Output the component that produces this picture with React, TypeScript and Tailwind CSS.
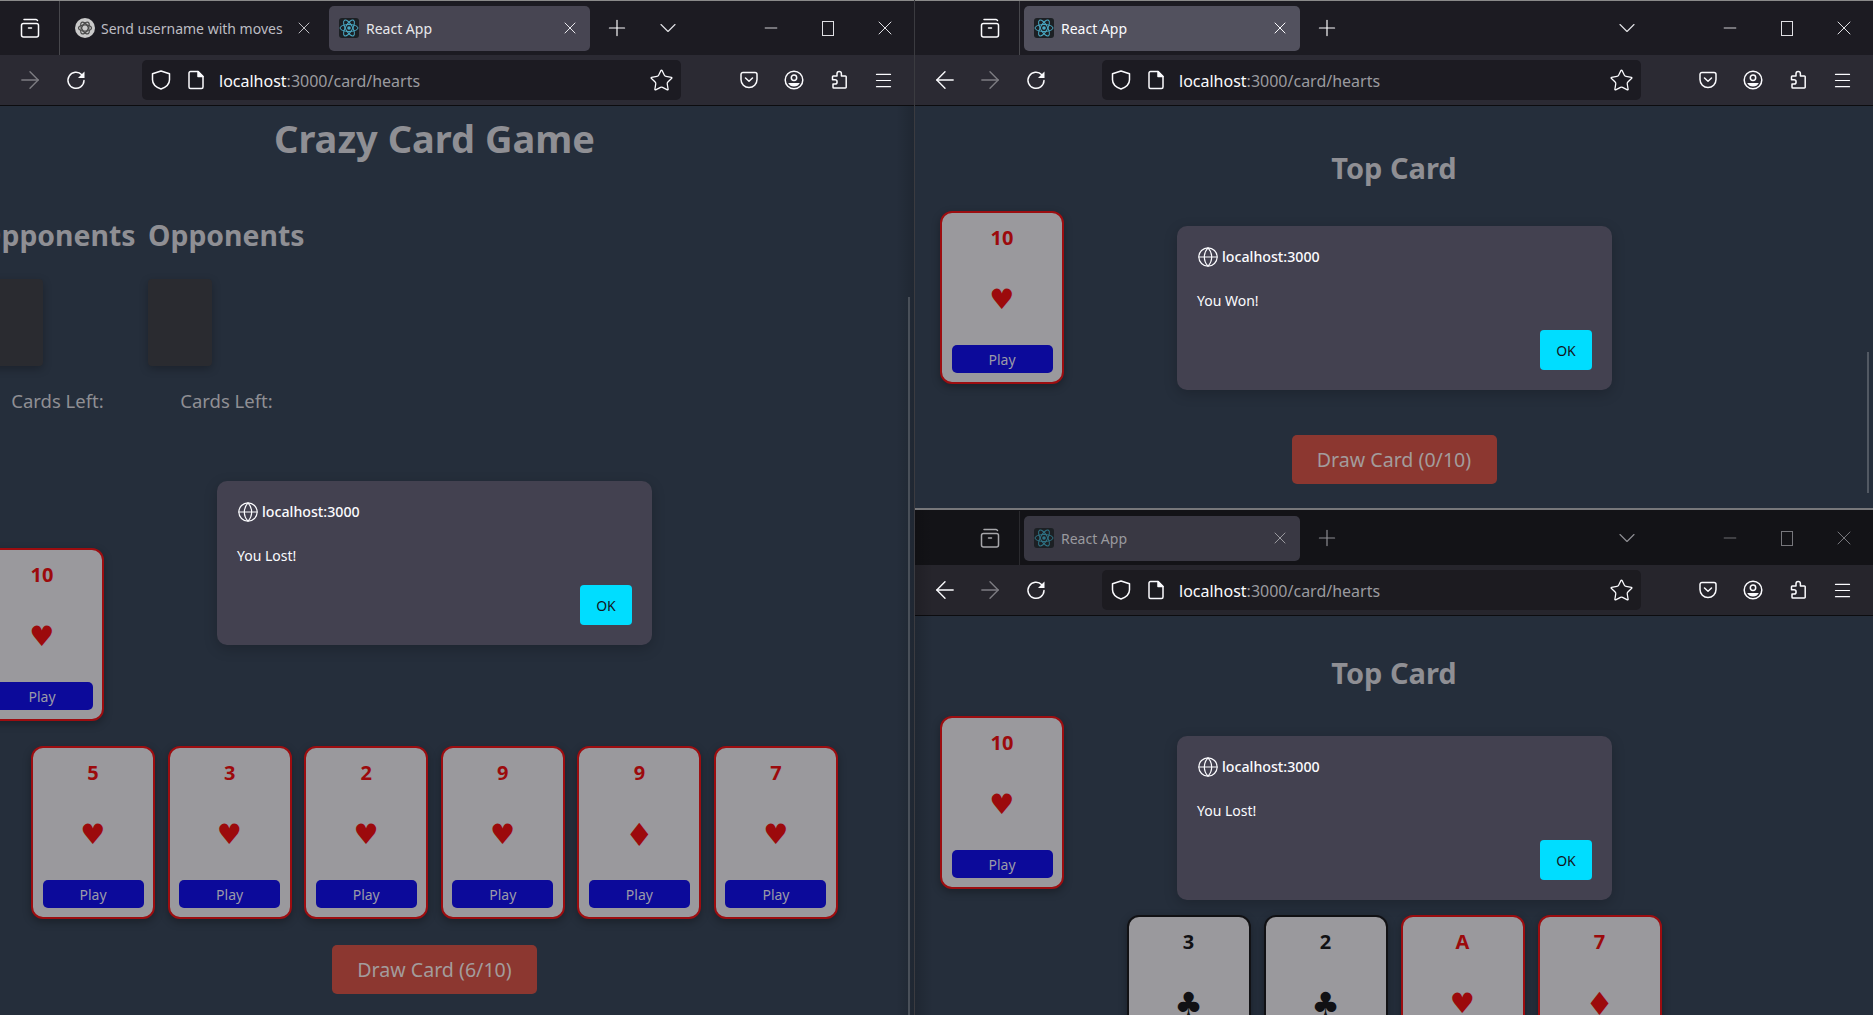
import { ReactNode } from "react";
import { ArrowLeft, ArrowRight, ChevronDown, Globe, Menu, Minus, Plus, Star, X } from "lucide-react";

const font = { fontFamily: '"Noto Sans", "Open Sans", sans-serif' };

function Svg({ children, className = "" }: { children: ReactNode; className?: string }) {
  return (
    <svg viewBox="0 0 20 20" width="20" height="20" fill="none" stroke="currentColor" strokeWidth="1.5" strokeLinecap="round" strokeLinejoin="round" className={className}>
      {children}
    </svg>
  );
}

// --- Browser chrome icons ---
const ViewIcon = () => (
  <Svg>
    <path d="M4 1.500h12a2 2 0 0 1 1.500 1" />
    <rect x="1.500" y="5.500" width="17" height="13.500" rx="2" />
    <path d="M8.500 10h3" />
  </Svg>
);

const ShieldIcon = () => (
  <Svg>
    <path d="M10 1l8.500 2.800v6c0 4.500-3.500 7.500-8.500 9.200-5-1.700-8.500-4.700-8.500-9.200v-6z" />
  </Svg>
);

const PageIcon = () => (
  <Svg>
    <path d="M3 3a1.500 1.500 0 0 1 1.500-1.500h7.500l5 5v10.500a1.500 1.500 0 0 1-1.500 1.500h-11A1.500 1.500 0 0 1 3 17z" />
    <path d="M12 1.500v5h5z" fill="currentColor" />
  </Svg>
);

const ReloadIcon = () => (
  <Svg>
    <path d="M15.800 4.800A8 8 0 1 0 18 10.500" />
    <path d="M18.500 1.500v6.500H12z" fill="currentColor" stroke="none" />
  </Svg>
);

const PocketIcon = () => (
  <Svg>
    <path d="M2 4.500a2 2 0 0 1 2-2h12a2 2 0 0 1 2 2v5a8 8 0 0 1-16 0z" />
    <path d="M6.500 8l3.500 3.300L13.500 8" />
  </Svg>
);

const AccountIcon = () => (
  <Svg>
    <circle cx="10" cy="10" r="8.800" />
    <circle cx="10" cy="7.800" r="2.700" />
    <path d="M4.200 13h11.600a6.500 6.500 0 0 1-11.600 0z" fill="currentColor" stroke="none" />
  </Svg>
);

const PuzzleIcon = () => (
  <Svg>
    <path d="M8 6V3.800a2.200 2.200 0 0 1 4.400 0V6h4a.8.8 0 0 1 .8.800V17.200a.8.8 0 0 1-.8.800H4.800a.8.8 0 0 1-.8-.800V14h2a2.100 2.100 0 0 0 0-4.200H3.500V6.800A.8.8 0 0 1 4.300 6z" />
  </Svg>
);

const ReactIcon = ({ dim }: { dim?: boolean }) => (
  <svg viewBox="0 0 20 20" width="20" height="20" className="shrink-0 rounded-[3px] bg-[#1c2024]">
    <g fill="none" stroke={dim ? "#2f7385" : "#4aa9c4"} strokeWidth="1">
      <ellipse cx="10" cy="10" rx="9" ry="3.500" />
      <ellipse cx="10" cy="10" rx="9" ry="3.500" transform="rotate(60 10 10)" />
      <ellipse cx="10" cy="10" rx="9" ry="3.500" transform="rotate(120 10 10)" />
    </g>
    <circle cx="10" cy="10" r="1.800" fill={dim ? "#2f7385" : "#4aa9c4"} />
  </svg>
);

const ChatIcon = () => (
  <svg viewBox="0 0 20 20" width="20" height="20" className="shrink-0">
    <circle cx="10" cy="10" r="10" fill="#c9c9c9" />
    <g fill="none" stroke="#4a4a4a" strokeWidth="1.300">
      <ellipse cx="10" cy="10" rx="6.500" ry="3.200" />
      <ellipse cx="10" cy="10" rx="6.500" ry="3.200" transform="rotate(60 10 10)" />
      <ellipse cx="10" cy="10" rx="6.500" ry="3.200" transform="rotate(120 10 10)" />
    </g>
  </svg>
);

function Slot({ className, children }: { className: string; children: ReactNode }) {
  return <div className={`flex shrink-0 items-center justify-center ${className}`}>{children}</div>;
}

function BrowserBar({ tabClass, dim, extraTab }: { tabClass: string; dim?: boolean; extraTab?: boolean }) {
  return (
    <>
      <div className={`flex h-[54px] shrink-0 items-center ${dim ? "bg-[#131317]" : "bg-[#1c1b22]"}`}>
        <div className={`flex h-full w-[105px] shrink-0 items-center justify-end border-r pr-[19px] ${dim ? "border-[#2a2a2e] text-[#a6a6aa]" : "border-[#47474c] text-[#fbfbfe]"}`}>
          <ViewIcon />
        </div>
        {extraTab ? (
          <div className="flex h-[45px] w-[269px] shrink-0 items-center pl-[15px] text-[14px] text-[#bdbdc2]">
            <ChatIcon />
            <span className="ml-[6px]">Send username with moves</span>
            <X size={20} strokeWidth={1.2} className="ml-[11px]" />
          </div>
        ) : (
          <div className="w-[4px] shrink-0" />
        )}
        <div className={`flex h-[45px] shrink-0 items-center rounded-[5px] pl-[10px] pr-[10px] text-[14px] ${tabClass}`}>
          <ReactIcon dim={dim} />
          <span className="ml-[7px]">React App</span>
          <X size={20} strokeWidth={1.2} className="ml-auto" />
        </div>
        <Slot className={`w-[54px] ${dim ? "text-[#8e8e93]" : "text-[#fbfbfe]"}`}>
          <Plus size={26} strokeWidth={1.1} />
        </Slot>
        <Slot className={`ml-auto mr-[54px] w-[40px] ${dim ? "text-[#8e8e93]" : "text-[#e0e0e4]"}`}>
          <ChevronDown size={28} strokeWidth={1} />
        </Slot>
        <div className={`flex w-[172px] shrink-0 items-center ${dim ? "text-[#77777c]" : "text-[#e0e0e4]"}`}>
          <Slot className="w-[57px]">
            <Minus size={20} strokeWidth={1.1} />
          </Slot>
          <Slot className="w-[57px]">
            <div className="h-[15px] w-[12px] border border-current" />
          </Slot>
          <Slot className="w-[57px]">
            <X size={24} strokeWidth={1} />
          </Slot>
        </div>
      </div>
      <div className={`flex h-[51px] shrink-0 items-start border-b border-[#0c0c0f] pt-[5px] ${dim ? "bg-[#26252c]" : "bg-[#2b2a33]"}`}>
        <Slot className="ml-[7px] h-[40px] w-[45px] text-[#fbfbfe]">
          <ArrowLeft size={28} strokeWidth={1.2} />
        </Slot>
        <Slot className="h-[40px] w-[46px] text-[#7d7c82]">
          <ArrowRight size={28} strokeWidth={1.2} />
        </Slot>
        <Slot className="h-[40px] w-[45px] text-[#fbfbfe]">
          <ReloadIcon />
        </Slot>
        <div className={`ml-[44px] flex h-[40px] w-[539px] shrink-0 items-center rounded-[5px] text-[16px] ${dim ? "bg-[#1c1b20]" : "bg-[#1c1b22]"}`}>
          <Slot className="ml-[9px] w-[20px] text-[#fbfbfe]">
            <ShieldIcon />
          </Slot>
          <Slot className="ml-[15px] w-[20px] text-[#fbfbfe]">
            <PageIcon />
          </Slot>
          <span className="ml-[13px] mt-[2px] text-[#fbfbfe]">
            localhost<span className="text-[#9a9a9f]">:3000/card/hearts</span>
          </span>
          <Star size={25} strokeWidth={1.2} className="ml-auto mr-[7px] text-[#fbfbfe]" />
        </div>
        <div className="ml-auto flex h-[40px] items-center pr-[8px] text-[#fbfbfe]">
          <Slot className="w-[45px]">
            <PocketIcon />
          </Slot>
          <Slot className="w-[45px]">
            <AccountIcon />
          </Slot>
          <Slot className="w-[45px]">
            <PuzzleIcon />
          </Slot>
          <Slot className="w-[45px]">
            <Menu size={21} strokeWidth={1.4} />
          </Slot>
        </div>
      </div>
    </>
  );
}

// --- Game ---
type CardData = { rank: string; suit: string; black?: boolean };

function PlayingCard({ rank, suit, black }: CardData) {
  return (
    <div className={`flex h-[173px] w-[124px] shrink-0 flex-col items-center rounded-[12px] border-[2px] bg-[#9a999d] shadow-[0_3px_8px_rgba(0,0,0,0.3)] ${black ? "border-[#111114] text-[#111114]" : "border-[#9c0d10] text-[#9c0a0c]"}`}>
      <div className="mt-[10px] h-[30px] text-[20px] font-bold leading-[30px]">{rank}</div>
      <div className={`mt-[27px] h-[40px] leading-[40px] ${suit === "♥" ? "text-[28px]" : "text-[32px]"}`} style={{ fontFamily: '"DejaVu Sans", sans-serif' }}>
        {suit}
      </div>
      <button className="mt-[25px] h-[28px] w-[101px] rounded-[5px] bg-[#0c0a9a] text-[14px] text-[#9b9aa8]">Play</button>
    </div>
  );
}

function Dialog({ message, className }: { message: string; className: string }) {
  return (
    <div className={`absolute left-[262px] flex h-[164px] w-[435px] flex-col rounded-[10px] bg-[#434150] px-[20px] shadow-[0_4px_14px_rgba(0,0,0,0.2)] ${className}`}>
      <div className="mt-[20px] flex items-center text-[14.2px] font-medium text-[#fbfbfe]">
        <Globe size={22} strokeWidth={1.3} />
        <span className="ml-[3px]">localhost:3000</span>
      </div>
      <div className="mt-[23px] text-[14px] leading-[20px] text-[#fbfbfe]">{message}</div>
      <button className="ml-auto mt-[19px] h-[40px] w-[52px] rounded-[4px] bg-[#00ddff] text-[14px] text-[#15141a]">OK</button>
    </div>
  );
}

function DrawButton({ label, className }: { label: string; className: string }) {
  return (
    <button className={`mx-auto block h-[49px] w-[205px] rounded-[5px] bg-[#8c3730] text-[19.6px] text-[#a39c9c] ${className}`}>{label}</button>
  );
}

const hand: CardData[] = [
  { rank: "5", suit: "♥" },
  { rank: "3", suit: "♥" },
  { rank: "2", suit: "♥" },
  { rank: "9", suit: "♥" },
  { rank: "9", suit: "♦" },
  { rank: "7", suit: "♥" },
];

const lowerHand: CardData[] = [
  { rank: "3", suit: "♣", black: true },
  { rank: "2", suit: "♣", black: true },
  { rank: "A", suit: "♥" },
  { rank: "7", suit: "♦" },
];

function Opponent() {
  return (
    <div className="w-[157px] shrink-0">
      <h2 className="h-[40px] whitespace-nowrap text-[28.4px] font-bold leading-[40px] text-[#8f8f94]">Opponents</h2>
      <div className="mt-[24px] h-[87px] w-[64px] rounded-[4px] bg-[#2a2b30] shadow-[0_3px_8px_rgba(0,0,0,0.25)]" />
      <div className="mt-[23px] text-center text-[18.5px] leading-[24px] text-[#8f8f94]">Cards Left:</div>
    </div>
  );
}

export default function App() {
  return (
    <div className="flex h-[1015px] w-[1873px] overflow-hidden bg-[#252e3b]" style={font}>
      {/* left window, pushed partly off screen */}
      <div className="relative h-[1015px] w-[915px] shrink-0 overflow-hidden border-r border-[#3b3b40]">
        <div className="relative -ml-[45px] flex h-[1015px] w-[959px] flex-col">
          <div className="h-px shrink-0 bg-[#8a8a8a]" />
          <BrowserBar extraTab tabClass="w-[261px] bg-[#474552] text-[#e8e8ec]" />
          <div className="relative min-h-0 flex-1 bg-[#252e3b]">
            <h1 className="mt-[7px] h-[50px] text-center text-[38px] font-bold leading-[50px] text-[#8f8f94]">Crazy Card Game</h1>
            <div className="mt-[52px] flex gap-[12px] pl-[24px]">
              <Opponent />
              <Opponent />
            </div>
            <div className="ml-[25px] mt-[135px]">
              <PlayingCard rank="10" suit="♥" />
            </div>
            <div className="mt-[25px] flex justify-center gap-[12.6px]">
              {hand.map((c, i) => (
                <PlayingCard key={i} {...c} />
              ))}
            </div>
            <DrawButton label="Draw Card (6/10)" className="mt-[26px]" />
            <Dialog message="You Lost!" className="top-[375px]" />
            <div className="absolute left-[953px] top-[191px] h-[720px] w-[2px] bg-[#525963]" />
          </div>
        </div>
        <div className="absolute bottom-0 right-0 top-[106px] w-[18px] bg-gradient-to-l from-black/15 to-transparent" />
      </div>

      <div className="flex h-[1015px] w-[958px] shrink-0 flex-col">
        <div className="flex h-[510px] shrink-0 flex-col border-b-2 border-[#77777a]">
          <div className="h-px shrink-0 bg-[#8a8a8a]" />
          <BrowserBar tabClass="w-[276px] bg-[#52515e] text-[#fbfbfe]" />
          <div className="relative min-h-0 flex-1 overflow-hidden bg-[#252e3b]">
            <h2 className="mt-[42px] h-[40px] text-center text-[29px] font-bold leading-[40px] text-[#8f8f94]">Top Card</h2>
            <div className="ml-[25px] mt-[23px]">
              <PlayingCard rank="10" suit="♥" />
            </div>
            <DrawButton label="Draw Card (0/10)" className="mt-[51px]" />
            <Dialog message="You Won!" className="top-[120px]" />
            <div className="absolute left-[952px] top-[246px] h-[141px] w-[2px] bg-[#525963]" />
          </div>
        </div>
        <div className="relative flex min-h-0 flex-1 flex-col">
          <div className="h-px shrink-0 bg-[#131317]" />
          <BrowserBar dim tabClass="w-[276px] bg-[#393843] text-[#9a9a9f]" />
          <div className="relative min-h-0 flex-1 overflow-hidden bg-[#252e3b]">
            <h2 className="mt-[37px] h-[40px] text-center text-[29px] font-bold leading-[40px] text-[#8f8f94]">Top Card</h2>
            <div className="ml-[25px] mt-[23px]">
              <PlayingCard rank="10" suit="♥" />
            </div>
            <div className="mt-[26px] flex justify-center gap-[13px]">
              {lowerHand.map((c, i) => (
                <PlayingCard key={i} {...c} />
              ))}
            </div>
            <Dialog message="You Lost!" className="top-[120px]" />
          </div>
          <div className="absolute bottom-0 left-0 top-0 w-[18px] bg-gradient-to-r from-black/15 to-transparent" />
        </div>
      </div>
    </div>
  );
}
